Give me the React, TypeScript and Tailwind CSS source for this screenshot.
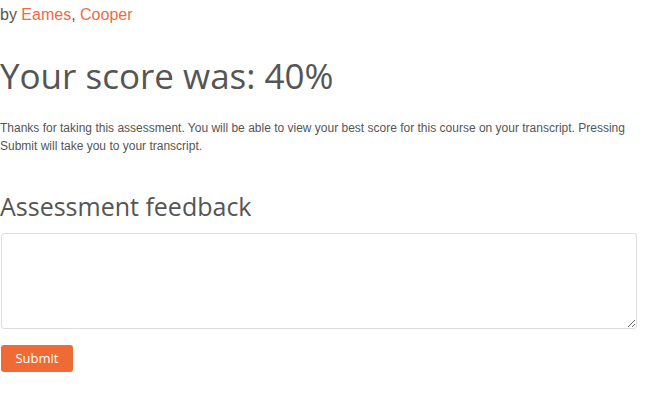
import React, { useState } from 'react';

export default function App() {
  const [feedback, setFeedback] = useState('');

  return (
    <div className="w-[670px] h-[408px] bg-white text-[#555555] font-['Liberation_Sans',Arial,sans-serif]">
      <div className="w-[637px]">
        <p className="pt-[4px] text-[16px] leading-[22px] text-[#555555]">
          by <a href="#" className="text-[#ef6a44]">Eames</a>, <a href="#" className="text-[#ef6a44]">Cooper</a>
        </p>

        <h1 className="mt-[28px] font-['Open_Sans',sans-serif] text-[35px] leading-[44px] font-normal text-[#555555]">
          Your score was: 40%
        </h1>

        <p className="mt-[21px] text-[12px] leading-[18px] text-[#555555]">
          Thanks for taking this assessment. You will be able to view your best score for this course on your transcript. Pressing Submit will take you to your transcript.
        </p>

        <h2 className="mt-[35px] font-['Open_Sans',sans-serif] text-[25px] leading-[32px] font-normal text-[#555555]">
          Assessment feedback
        </h2>

        <textarea
          value={feedback}
          onChange={(e) => setFeedback(e.target.value)}
          className="mt-[11px] ml-[1px] block h-[96px] w-[636px] rounded-[3px] border border-[#dddddd] bg-white p-2 text-[14px] outline-none"
        />

        <button
          type="button"
          className="mt-[16px] ml-[1px] h-[27px] w-[72px] rounded-[3px] bg-[#f06a35] font-['Open_Sans',sans-serif] text-[13px] text-white"
        >
          Submit
        </button>
      </div>
    </div>
  );
}
